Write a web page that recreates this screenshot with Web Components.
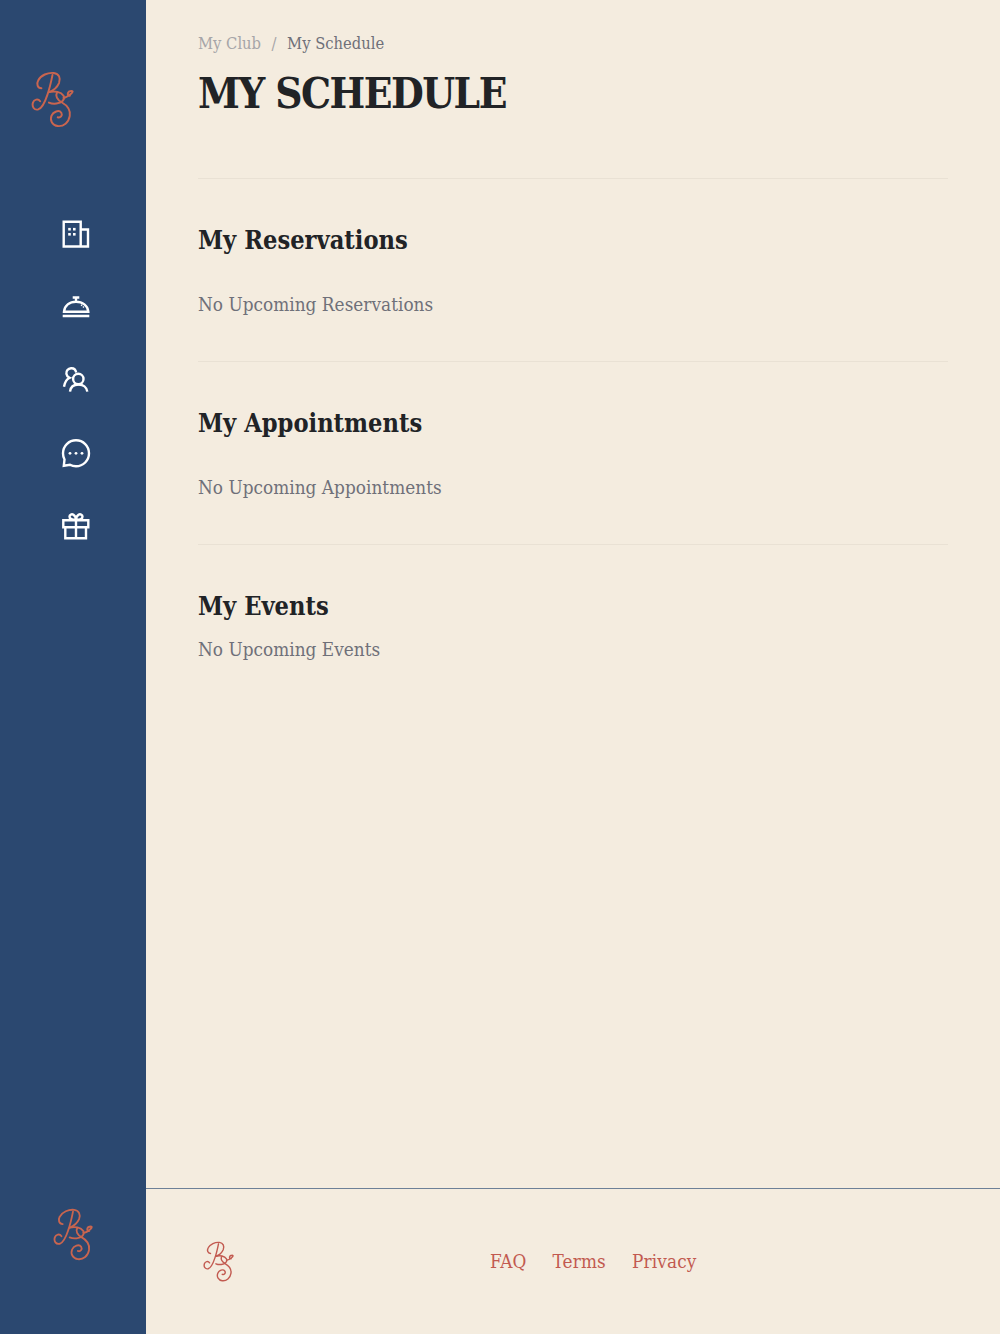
<!DOCTYPE html>
<html lang="en">
<head>
<meta charset="utf-8">
<title>My Schedule</title>
<style>
  html, body { margin: 0; height: 100%; }
  body { font-family: "DejaVu Serif Condensed", "DejaVu Serif", serif; font-stretch: condensed; background: #f4ecdf; }
</style>
</head>
<body>
<club-layout>
  <side-bar slot="side"></side-bar>
  <bread-crumb parent="My Club" current="My Schedule"></bread-crumb>
  <page-title>MY SCHEDULE</page-title>
  <schedule-section heading="My Reservations" empty="No Upcoming Reservations"></schedule-section>
  <schedule-section heading="My Appointments" empty="No Upcoming Appointments"></schedule-section>
  <schedule-section heading="My Events" empty="No Upcoming Events" compact></schedule-section>
  <club-footer slot="foot"></club-footer>
</club-layout>

<script>
const LOGO = `
  <path d="M122 113C110 113 106 100 112 89C120 73 142 64 160 66C176 68 182 82 176 97C170 111 158 120 145 125" />
  <path d="M156 72C152 92 148 112 140 134C134 152 126 174 112 178C100 181 92 170 96 157C99 147 112 144 118 153" />
  <path d="M145 125C162 120 182 124 190 136C196 148 184 158 168 160C160 161 152 160 145 157" />
  <path d="M170 126C164 136 170 148 184 156C200 165 212 178 209 198C206 218 190 231 172 229C156 227 147 212 153 197C158 185 176 178 183 188C188 197 180 205 172 202" />
  <path d="M190 142C196 142 206 136 213 130C219 125 219 121 215 121C210 121 204 124 203 129C202 134 206 138 210 135" />`;

class BsLogo extends HTMLElement {
  connectedCallback() {
    const w = this.getAttribute("size") || 43;
    this.attachShadow({ mode: "open" }).innerHTML = `
      <style>
        :host { display: block; line-height: 0; color: var(--logo, #c9654f); }
        svg { fill: none; stroke: currentColor; stroke-width: 6; stroke-linecap: round; }
      </style>
      <svg width="${w}" viewBox="90 60 132 174" aria-label="logo">${LOGO}</svg>`;
  }
}

const ICONS = {
  building: `<path d="M3.700 3.800H20.700V28.500H3.700ZM20.700 11.500H28V28.500H20.700Z"/>
    <g stroke="none" fill="currentColor"><rect x="8.200" y="9.900" width="2.600" height="2.600"/><rect x="13" y="9.900" width="2.600" height="2.600"/><rect x="8.200" y="15" width="2.600" height="2.600"/><rect x="13" y="15" width="2.600" height="2.600"/></g>`,
  bell: `<path d="M4 20.700C4.500 14.500 9.500 10.700 16 10.700C22.500 10.700 27.800 14.500 28.300 20.700ZM16 10.700V6.700M12.700 6.500H19.300M2.700 25H29.300"/>
    <path d="M21 13.800L24.500 17" stroke-width="1.200" stroke-dasharray="1.500 1"/>`,
  people: `<circle cx="18.300" cy="15" r="5.200"/><path d="M10 27.700C10.500 23 14 20.500 18.500 20.500C23 20.500 26.800 23 27.300 27.700"/>
    <path d="M16.200 8.400C15.600 5.600 13.400 4 11 4.200C8 4.500 6 7 6.400 9.800C6.700 11.700 7.800 13 9.500 13.800C6.800 15 4.800 18.200 4 22.700"/>`,
  chat: `<path d="M16 3.300C23.200 3.300 29 9.100 29 16.300C29 23.500 23.200 29.300 16 29.300C13.800 29.300 11.800 28.800 10 27.800L3.800 28.800L4.500 22.500C3.500 20.700 3 18.600 3 16.300C3 9.100 8.800 3.300 16 3.300Z"/>
    <g stroke="none" fill="currentColor"><circle cx="10" cy="16.300" r="1.400"/><circle cx="16" cy="16.300" r="1.400"/><circle cx="22" cy="16.300" r="1.400"/></g>`,
  gift: `<path d="M3.300 10.200H28.300V17.300H3.300ZM5.300 17.300V28.300H26V17.300M16 10.200V28.300"/>
    <path d="M16 10C12 10 9.500 8.800 9.500 6.600C9.500 4.600 11.800 3.700 13.500 4.800C15 5.800 16 8 16 10C16 8 17 5.800 18.500 4.800C20.200 3.700 22.500 4.600 22.500 6.600C22.500 8.800 20 10 16 10Z"/>`
};

class NavIcon extends HTMLElement {
  connectedCallback() {
    this.attachShadow({ mode: "open" }).innerHTML = `
      <style>
        :host { display: block; width: 32px; height: 32px; color: #fff; }
        svg { display: block; fill: none; stroke: currentColor; stroke-width: 2.400; }
      </style>
      <svg width="32" height="32" viewBox="0 0 32 32">${ICONS[this.getAttribute("name")]}</svg>`;
  }
}

class SideBar extends HTMLElement {
  connectedCallback() {
    this.attachShadow({ mode: "open" }).innerHTML = `
      <style>
        :host { display: flex; flex-direction: column; height: 100%; box-sizing: border-box; background: #2b4870; }
        .top { padding: 71px 0 0 31px; }
        nav { display: flex; flex-direction: column; gap: 41px; padding: 90px 0 0 60px; flex: 1; }
        .bottom { padding: 0 0 73px 53px; }
      </style>
      <div class="top"><bs-logo size="43"></bs-logo></div>
      <nav>
        <nav-icon name="building"></nav-icon>
        <nav-icon name="bell"></nav-icon>
        <nav-icon name="people"></nav-icon>
        <nav-icon name="chat"></nav-icon>
        <nav-icon name="gift"></nav-icon>
      </nav>
      <div class="bottom"><bs-logo size="40"></bs-logo></div>`;
  }
}

class BreadCrumb extends HTMLElement {
  connectedCallback() {
    this.attachShadow({ mode: "open" }).innerHTML = `
      <style>
        :host { display: block; font-size: 16.400px; line-height: 22px; color: #a6a5a8; padding-top: 33px; }
        .sep { margin: 0 10.500px; }
        .cur { color: #6f7079; }
      </style>
      <span>${this.getAttribute("parent")}</span><span class="sep">/</span><span class="cur">${this.getAttribute("current")}</span>`;
  }
}

class PageTitle extends HTMLElement {
  connectedCallback() {
    this.attachShadow({ mode: "open" }).innerHTML = `
      <style>
        :host { display: block; padding-bottom: 45px; border-bottom: 1px solid #e9e1d4; }
        h1 { margin: 0; font-size: 42px; line-height: 78px; letter-spacing: -1.550px; font-weight: 700; color: #212326; }
      </style>
      <h1><slot></slot></h1>`;
  }
}

class ScheduleSection extends HTMLElement {
  connectedCallback() {
    this.attachShadow({ mode: "open" }).innerHTML = `
      <style>
        :host { display: block; padding: 42px 0 43px; border-bottom: 1px solid #e9e1d4; }
        :host([compact]) { border-bottom: none; }
        h2 { margin: 0 0 33px; font-size: 25.200px; line-height: 38px; font-weight: 700; color: #212326; }
        :host([compact]) h2 { margin-bottom: 12px; }
        p { margin: 0; font-size: 18.800px; line-height: 26px; letter-spacing: 0.030px; color: #6f7079; }
      </style>
      <h2>${this.getAttribute("heading")}</h2>
      <p>${this.getAttribute("empty")}</p>`;
  }
}

class ClubFooter extends HTMLElement {
  connectedCallback() {
    this.attachShadow({ mode: "open" }).innerHTML = `
      <style>
        :host { display: flex; align-items: center; box-sizing: border-box; height: 146px; border-top: 1px solid #6d8097; padding: 0 0 0 57px; --logo: #c25a50; }
        .links { display: flex; gap: 26px; margin-left: 256px; font-size: 18.800px; letter-spacing: 0.150px; color: #c25a50; }
        a { color: inherit; text-decoration: none; }
      </style>
      <bs-logo size="31"></bs-logo>
      <div class="links"><a href="#">FAQ</a><a href="#">Terms</a><a href="#">Privacy</a></div>`;
  }
}

class ClubLayout extends HTMLElement {
  connectedCallback() {
    this.attachShadow({ mode: "open" }).innerHTML = `
      <style>
        :host { display: grid; grid-template-columns: 146px 1fr; grid-template-rows: 1fr auto; height: 1334px; }
        .side { grid-row: 1 / 3; }
        main { padding: 0 52px; min-width: 0; }
      </style>
      <div class="side"><slot name="side"></slot></div>
      <main><slot></slot></main>
      <div><slot name="foot"></slot></div>`;
  }
}

customElements.define("bs-logo", BsLogo);
customElements.define("nav-icon", NavIcon);
customElements.define("side-bar", SideBar);
customElements.define("bread-crumb", BreadCrumb);
customElements.define("page-title", PageTitle);
customElements.define("schedule-section", ScheduleSection);
customElements.define("club-footer", ClubFooter);
customElements.define("club-layout", ClubLayout);
</script>
</body>
</html>
